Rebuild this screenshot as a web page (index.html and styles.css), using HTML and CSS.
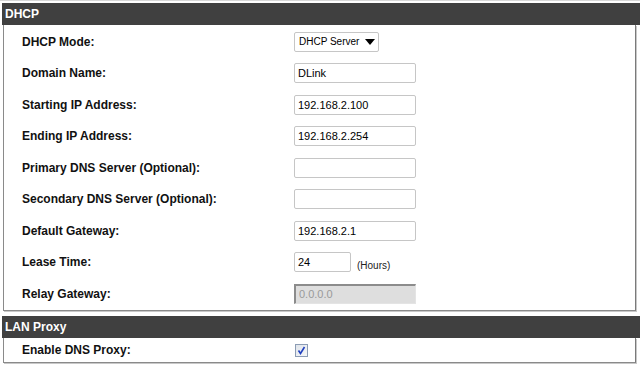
FILE: index.html
```html
<!DOCTYPE html>
<html lang="en">
<head>
  <meta charset="UTF-8" />
  <title>DHCP Settings</title>
  <link rel="stylesheet" href="styles.css">
</head>
<body>
  <div class="page">
    <section class="panel">
      <h2 class="panel-title">DHCP</h2>
      <div class="panel-body">
        <div class="row">
          <label>DHCP Mode:</label>
          <div class="field">
            <div class="select"><span>DHCP Server</span><span class="arrow"></span></div>
          </div>
        </div>
        <div class="row">
          <label>Domain Name:</label>
          <div class="field"><input type="text" value="DLink" /></div>
        </div>
        <div class="row">
          <label>Starting IP Address:</label>
          <div class="field"><input type="text" value="192.168.2.100" /></div>
        </div>
        <div class="row">
          <label>Ending IP Address:</label>
          <div class="field"><input type="text" value="192.168.2.254" /></div>
        </div>
        <div class="row">
          <label>Primary DNS Server (Optional):</label>
          <div class="field"><input type="text" value="" /></div>
        </div>
        <div class="row">
          <label>Secondary DNS Server (Optional):</label>
          <div class="field"><input type="text" value="" /></div>
        </div>
        <div class="row">
          <label>Default Gateway:</label>
          <div class="field"><input type="text" value="192.168.2.1" /></div>
        </div>
        <div class="row">
          <label>Lease Time:</label>
          <div class="field">
            <input type="text" class="short" value="24" />
            <span class="unit">(Hours)</span>
          </div>
        </div>
        <div class="row">
          <label>Relay Gateway:</label>
          <div class="field"><input type="text" class="disabled" value="0.0.0.0" disabled /></div>
        </div>
      </div>
    </section>

    <section class="panel">
      <h2 class="panel-title">LAN Proxy</h2>
      <div class="panel-body">
        <div class="row row-short">
          <label>Enable DNS Proxy:</label>
          <div class="field">
            <span class="check">
              <svg width="9" height="9" viewBox="0 0 9 9"><path d="M1.5 4.5 L3.5 7.5 L7.5 1" fill="none" stroke="#2040c0" stroke-width="1.6"/></svg>
            </span>
          </div>
        </div>
      </div>
    </section>
  </div>
</body>
</html>
```

FILE: styles.css
```css
body {
  margin: 0;
  background: #fff;
  font-family: 'Liberation Sans', Arial, sans-serif;
  color: #000;
}
.page {
  padding-top: 2px;
  border-top: 1px solid #d8d8d8;
}
.panel {
  margin-bottom: 5px;
}
.panel-title {
  margin: 0 0 0 2px;
  height: 22px;
  line-height: 22px;
  padding-left: 3px;
  background: #404040;
  color: #fff;
  font-size: 12px;
  font-weight: bold;
}
.panel-body {
  margin-left: 3px;
  width: 631px;
  border-left: 1px solid #8a8a8a;
  border-right: 1px solid #7a7a7a;
  border-bottom: 1px solid #8a8a8a;
  box-shadow: 1px 1px 0 #c8c8c8;
  padding-top: 1px;
}
.row {
  display: grid;
  grid-template-columns: 272px 1fr;
  align-items: center;
  height: 31.5px;
  padding-left: 18px;
}
.row-short {
  height: 23px;
}
.row label {
  font-size: 12px;
  font-weight: bold;
  color: #111;
}
.field {
  display: flex;
  align-items: center;
}
.field input {
  box-sizing: border-box;
  width: 122px;
  height: 20px;
  margin: 0;
  padding: 0 3px;
  border: 1px solid #c6c6c6;
  border-radius: 2px;
  font-family: 'Liberation Sans', Arial, sans-serif;
  font-size: 11px;
  color: #000;
  background: #fff;
}
.field input.short {
  width: 57px;
}
.field input.disabled {
  background: #dedede;
  color: #9a9a9a;
  border-radius: 0;
  border-top: 2px solid #8c8c8c;
  border-left: 2px solid #8c8c8c;
  border-right: 1px solid #e4e4e4;
  border-bottom: 1px solid #e4e4e4;
}
.unit {
  margin-left: 6px;
  margin-top: 7px;
  font-size: 10px;
  color: #222;
}
.select {
  box-sizing: border-box;
  display: flex;
  align-items: center;
  justify-content: space-between;
  width: 85px;
  height: 20px;
  padding: 0 3px 0 4px;
  border: 1px solid #c6c6c6;
  border-radius: 2px;
  font-size: 10px;
  white-space: nowrap;
}
.arrow {
  flex-shrink: 0;
  width: 0;
  height: 0;
  border-left: 5px solid transparent;
  border-right: 5px solid transparent;
  border-top: 6px solid #000;
}
.check {
  box-sizing: border-box;
  display: flex;
  align-items: center;
  justify-content: center;
  width: 13px;
  height: 13px;
  margin-left: 1px;
  border: 1px solid #8c9cb4;
  background: linear-gradient(135deg, #dfe4ea, #f6f7f9);
}
```
